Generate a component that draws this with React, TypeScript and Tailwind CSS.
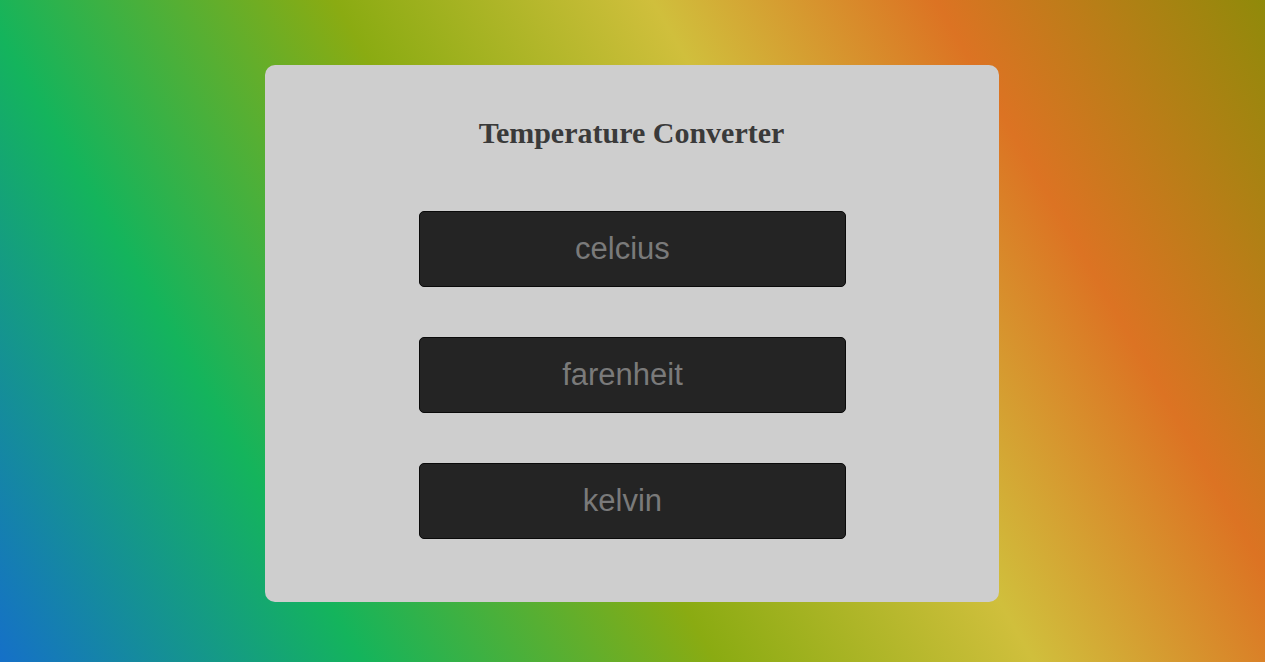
import React from "react";

export default function App() {
  const fields = ["celcius", "farenheit", "kelvin"];
  return (
    <div className="w-full h-screen flex items-center justify-center pt-[4px] pr-[2px] bg-[linear-gradient(60deg,#1570c8_0%,#14b45c_22%,#8aab12_43.5%,#d0bf3c_62.8%,#dc7323_80%,#908a0a_100%)]">
      <div className="w-[734px] h-[537px] bg-[#cecece] rounded-[10px] flex flex-col items-center pt-[51px]">
        <h1 className="h-[34px] leading-[34px] text-[30px] font-bold text-[#3a3a3a] font-['Liberation_Serif','Times_New_Roman',serif]">
          Temperature Converter
        </h1>
        <div className="mt-[61px] ml-[2px] flex flex-col gap-[50px]">
          {fields.map((f) => (
            <input
              key={f}
              type="text"
              placeholder={f}
              className="w-[427px] h-[76px] bg-[#242424] border border-[#0a0a0a] rounded-[5px] text-center pr-[20px] text-[31px] text-[#7a7a7a] placeholder:text-[#7a7a7a] font-['Liberation_Sans',Arial,sans-serif] outline-none"
            />
          ))}
        </div>
      </div>
    </div>
  );
}
